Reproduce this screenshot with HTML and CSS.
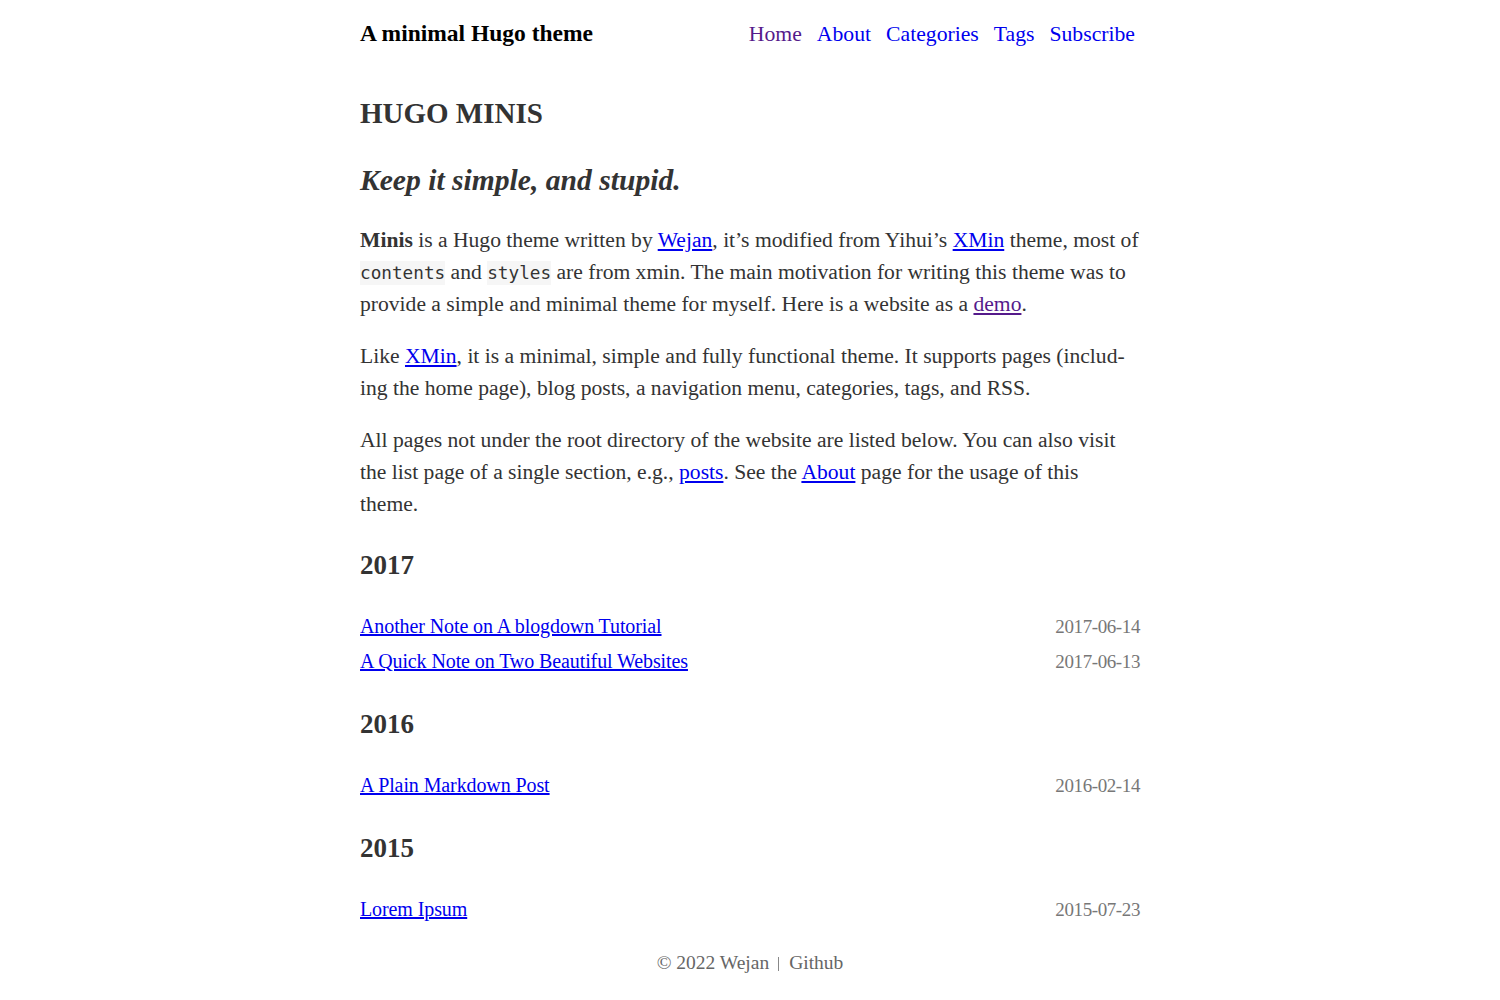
FILE: index.html
```html
<!DOCTYPE html>
<html lang="en">
<head>
<meta charset="utf-8">
<title>A minimal Hugo theme</title>
<link rel="stylesheet" href="styles.css">
</head>
<body>
<div class="wrap">
  <header class="site-header">
    <a class="site-title" href="#">A minimal Hugo theme</a>
    <nav class="menu">
      <a class="visited" href="#">Home</a>
      <a href="#">About</a>
      <a href="#">Categories</a>
      <a href="#">Tags</a>
      <a href="#">Subscribe</a>
    </nav>
  </header>

  <main class="content">
    <h1 class="page-title">HUGO MINIS</h1>
    <h2 class="tagline">Keep it simple, and stupid.</h2>

    <p><strong>Minis</strong> is a Hugo theme written by <a href="#">Wejan</a>, it’s modified from Yihui’s <a href="#">XMin</a> theme, most of <code>contents</code> and <code>styles</code> are from xmin. The main motivation for writing this theme was to provide a simple and minimal theme for myself. Here is a website as a <a class="visited" href="#">demo</a>.</p>

    <p>Like <a href="#">XMin</a>, it is a minimal, simple and fully functional theme. It supports pages (includ&shy;ing the home page), blog posts, a navigation menu, categories, tags, and RSS.</p>

    <p>All pages not under the root directory of the website are listed below. You can also visit the list page of a single section, e.g., <a href="#">posts</a>. See the <a href="#">About</a> page for the usage of this theme.</p>

    <section class="year">
      <h3 class="year-title">2017</h3>
      <ul class="posts">
        <li><a href="#">Another Note on A blogdown Tutorial</a><span class="date">2017-06-14</span></li>
        <li><a href="#">A Quick Note on Two Beautiful Websites</a><span class="date">2017-06-13</span></li>
      </ul>
    </section>

    <section class="year">
      <h3 class="year-title">2016</h3>
      <ul class="posts">
        <li><a href="#">A Plain Markdown Post</a><span class="date">2016-02-14</span></li>
      </ul>
    </section>

    <section class="year">
      <h3 class="year-title">2015</h3>
      <ul class="posts">
        <li><a href="#">Lorem Ipsum</a><span class="date">2015-07-23</span></li>
      </ul>
    </section>
  </main>

  <footer class="site-footer">
    <span>© 2022 Wejan</span><span class="sep"></span><a href="#">Github</a>
  </footer>
</div>
</body>
</html>
```

FILE: styles.css
```css
html, body {
  margin: 0;
  padding: 0;
  background: #fff;
}

body {
  font-family: "Liberation Serif", "Times New Roman", serif;
  font-size: 21.6px;
  color: #333;
}

.wrap {
  width: 780px;
  margin: 0 auto;
}

a {
  color: #0000ee;
}

a.visited {
  color: #551a8b;
}

.site-header {
  display: flex;
  justify-content: space-between;
  align-items: baseline;
  padding: 19px 0 21px;
  line-height: 28px;
}

.site-title {
  font-size: 23.5px;
  font-weight: bold;
  color: #000;
  text-decoration: none;
}

.menu {
  display: flex;
  gap: 15px;
  margin-right: 5px;
  font-size: 21.7px;
}

.menu a {
  text-decoration: none;
}

.page-title {
  margin: 26px 0 0;
  font-size: 29px;
  line-height: 36px;
  font-weight: bold;
}

.tagline {
  margin: 31px 0 0;
  font-size: 29.6px;
  line-height: 36px;
  font-style: italic;
  font-weight: bold;
}

p {
  margin: 26px 0 0;
  line-height: 32px;
  hyphens: manual;
}

p + p {
  margin-top: 20px;
}

code {
  font-family: "DejaVu Sans Mono", monospace;
  font-size: 17.7px;
  line-height: 1;
  background: #f6f6f6;
  padding: 2px 0;
}

.year-title {
  margin: 28px 0 0;
  font-size: 27px;
  line-height: 34px;
  font-weight: bold;
}

.posts {
  list-style: none;
  margin: 27px 0 0;
  padding: 0;
}

.posts li {
  display: flex;
  justify-content: space-between;
  align-items: baseline;
  line-height: 35px;
  font-size: 20px;
}

.posts li a {
  letter-spacing: -0.1px;
}

.date {
  color: #777;
  font-size: 19px;
  letter-spacing: -0.4px;
}

.site-footer {
  margin-top: 19.5px;
  display: flex;
  justify-content: center;
  align-items: center;
  line-height: 32px;
  font-size: 19.5px;
  color: #666;
}

.site-footer a {
  color: #666;
  text-decoration: none;
}

.site-footer .sep {
  display: inline-block;
  width: 1px;
  height: 14px;
  background: #888;
  margin: 2px 10px 0 9px;
}
```
